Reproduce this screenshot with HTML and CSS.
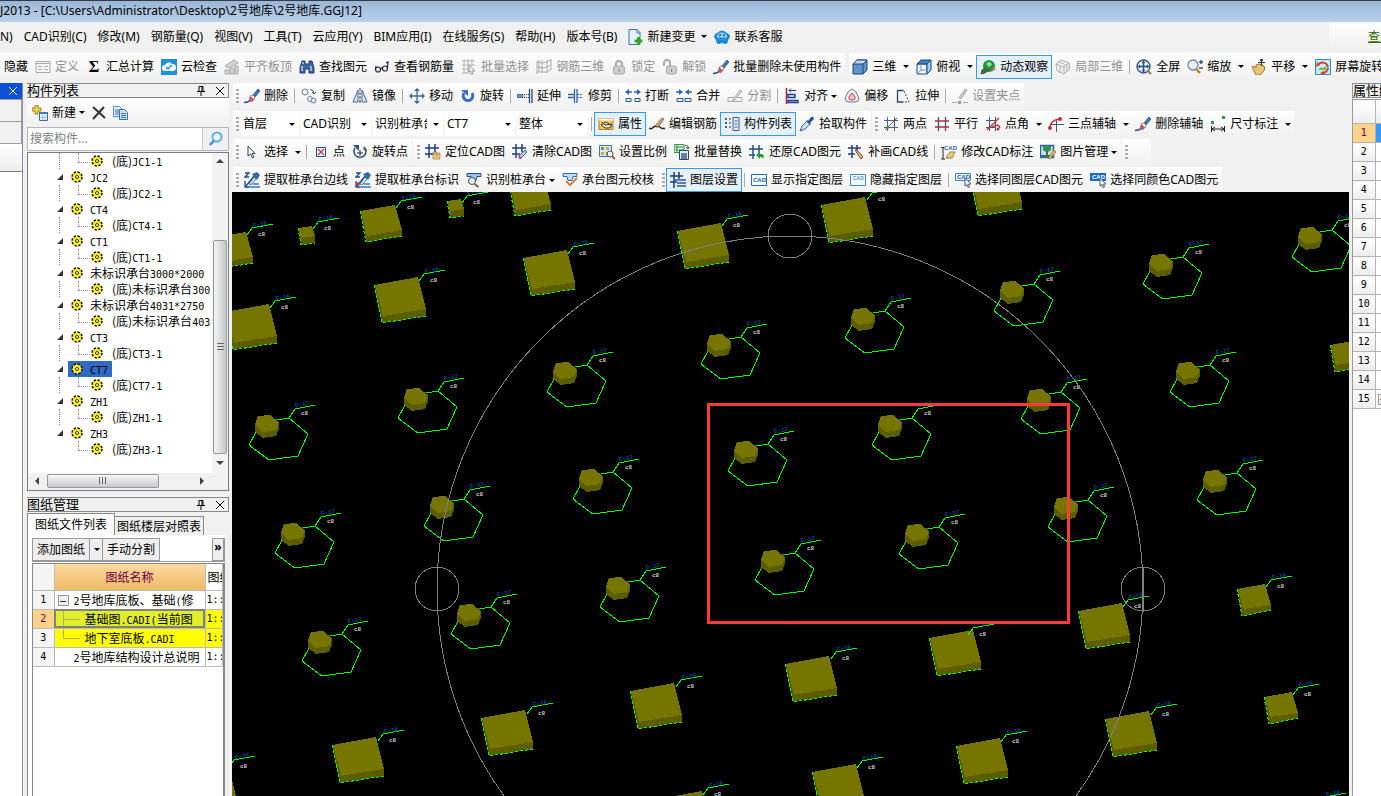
FILE: index.html
```html
<!DOCTYPE html>
<html lang="zh-CN">
<head>
<meta charset="utf-8">
<title>GGJ2013</title>
<link rel="stylesheet" href="styles.css">
</head>
<body>
<svg class="defs" aria-hidden="true"><defs>
<symbol id="define" viewBox="0 0 16 16"><path d="M1 2.500h14v11H1z" fill="#f4f4f4" stroke="#a8a8a8"/><path d="M1 4.500h14M3 7.500h4M3 10.500h4M9 7.500h4M9 10.500h4" stroke="#aaa"/></symbol>
<symbol id="cloud" viewBox="0 0 16 16"><path d="M0 0h16v16H0z" fill="#1d8fe0"/><path d="M4 12a3 3 0 0 1 0-6 4 4 0 0 1 7-1 3.500 3.500 0 0 1 1 7z" fill="#fff"/><path d="M5 8l2 2 4-4" stroke="#1d8fe0" fill="none" stroke-width="1.500"/></symbol>
<symbol id="level" viewBox="0 0 16 16"><path d="M1 7l9-6 4 3-9 5zM1 11h4v4H1zM6 9h4v6H6zM11 7h3v8h-3z" fill="#d4d4d4" stroke="#a8a8a8"/></symbol>
<symbol id="bino" viewBox="0 0 16 16"><path d="M3 2h3v3h4V2h3l2 7v5h-5v-4H6v4H1V9z" fill="#41669e" stroke="#1f3c70"/><path d="M3 7v5M12 7v5M4 3v2" stroke="#b7cdec" stroke-width="1.500"/></symbol>
<symbol id="glass" viewBox="0 0 16 16"><g fill="none" stroke="#223" stroke-width="1.200"><circle cx="4" cy="10.500" r="2.500"/><circle cx="11" cy="9.500" r="2.500"/><path d="M6.500 10q1-2 2 0M1.500 10L2 7M13.500 9L14 3l-2 1"/></g></symbol>
<symbol id="bsel" viewBox="0 0 16 16"><path d="M1 2h13M1 6h13M1 10h7M1 14h7M3 0v15M7 0v15M11 0v7" stroke="#b4b4b4" fill="none"/><path d="M8 6l6 6-3 0 1 3-2 0-1-3-1 1z" fill="#eee" stroke="#999"/></symbol>
<symbol id="reb3d" viewBox="0 0 16 16"><path d="M1 2v13M6 1v13M11 1v13M15 0v11M1 3l5 1 5-1 4-2M1 8l5 1 5-1 4-2M1 13l5 0 5 0 4-3M3 1v12" fill="none" stroke="#aaa"/></symbol>
<symbol id="lock" viewBox="0 0 16 16"><path d="M5 8V5a3 3 0 0 1 6 0v3" fill="none" stroke="#aaa" stroke-width="2"/><rect x="2.500" y="7" width="11" height="8" rx="2" fill="#ccc" stroke="#aaa"/><path d="M8 10v3" stroke="#888"/></symbol>
<symbol id="unlock" viewBox="0 0 16 16"><path d="M2 7V4a3 3 0 0 1 6 0v3" fill="none" stroke="#aaa" stroke-width="2"/><rect x="4.500" y="7" width="10" height="8" rx="2" fill="#ccc" stroke="#aaa"/><path d="M9.500 10v3" stroke="#888"/></symbol>
<symbol id="brush" viewBox="0 0 16 16"><path d="M9 7l5-6 2 2-5 6z" fill="#3c74c2" stroke="#1d4680" stroke-width=".7"/><path d="M6 8l3-1 2 2-1 3z" fill="#f3ead2" stroke="#806f53" stroke-width=".7"/><path d="M5 11l1-3 4 4-2 2q-3 0-3-3z" fill="#c2577a"/><path d="M0 14.500q4 0 6-2" stroke="#274f8a" stroke-width="1.500" fill="none"/></symbol>
<symbol id="cube" viewBox="0 0 16 16"><path d="M1 5l4-4h10v10l-4 4H1z" fill="#5c94cf" stroke="#1e4675"/><path d="M1 5l4-4h10l-4 4z" fill="#bcdaf5" stroke="#1e4675"/><path d="M11 5v10" stroke="#1e4675"/></symbol>
<symbol id="cubetop" viewBox="0 0 16 16"><path d="M1 5h10v10H1z" fill="#f0f6fd" stroke="#1e4675"/><path d="M11 5l4-4v10l-4 4z" fill="#a9cbee" stroke="#1e4675"/><path d="M1 5l4-4h10l-4 4z" fill="#3f82c8" stroke="#1e4675"/><path d="M5 5v6h6M5 11l-4 4" stroke="#7095c0" fill="none"/></symbol>
<symbol id="orbit" viewBox="0 0 16 16"><circle cx="9" cy="7" r="6" fill="#1e9440"/><path d="M6 5q3-4 6 0-1 3-3 3z" fill="#8fe08f"/><path d="M1 15q0-5 4-6 1 3 5 1-4 5-9 5z" fill="#2a7a44" stroke="#7b4030" stroke-width=".8"/><circle cx="14" cy="10" r="1.500" fill="#ef7b2b"/></symbol>
<symbol id="local" viewBox="0 0 16 16"><path d="M1 5l5-4 8 3 1 6-6 5-7-3zM1 5l8 3 5-4M9 8v7M4 3l7 3M5 6v8M12 6v7" fill="#eee" stroke="#b0b0b0"/></symbol>
<symbol id="full" viewBox="0 0 16 16"><circle cx="7.500" cy="7.500" r="6.500" fill="#eaf1fa" stroke="#37527d" stroke-width="1.400"/><path d="M7.500 3v9M3 7.500h9" stroke="#214d91" stroke-width="1.500"/><path d="M7.500 1.500l2 2.500h-4zM7.500 13.500l2-2.500h-4zM1.500 7.500L4 5.500v4zM13.500 7.500L11 5.500v4z" fill="#214d91"/><path d="M12 12l3 3" stroke="#a96e2c" stroke-width="2"/></symbol>
<symbol id="zoom" viewBox="0 0 16 16"><circle cx="6" cy="6" r="5" fill="#e8f1fb" stroke="#6f87a8" stroke-width="1.300"/><path d="M9 10l4 4" stroke="#c08a3e" stroke-width="2.500"/><path d="M14 1v4M12 3h4M12 9h4" stroke="#294f8c" stroke-width="1.300"/></symbol>
<symbol id="pan" viewBox="0 0 16 16"><path d="M1 8l2-1 2 2 0-3 3-1 5 2 1 3-2 3-3 3H5z" fill="#e8c478" stroke="#9a7333"/><path d="M10.500 0v7M7 3.500h7M9 1.500L10.500 0 12 1.500" stroke="#333" stroke-width="1.200" fill="none"/></symbol>
<symbol id="rot" viewBox="0 0 16 16"><path d="M.5.500h15v15H.5z" fill="#c9ebfa" stroke="#2b88bd"/><path d="M3 6a5.500 5.500 0 0 1 10 2M13 9a5.500 5.500 0 0 1-6 5" fill="none" stroke="#e03a2f" stroke-width="2"/><path d="M1 8l1-5 3 3zM5 14l4-2v4z" fill="#e03a2f"/><path d="M3 11l3-3 2 1 3-2 1 4z" fill="#6cbd55"/></symbol>
<symbol id="copy" viewBox="0 0 16 16"><circle cx="4" cy="4" r="3" fill="#eef3fa" stroke="#6b7f9d"/><circle cx="9" cy="11" r="2.500" fill="#f4f7fb" stroke="#6b7f9d"/><circle cx="12.500" cy="12.500" r="2.500" fill="#d6e2f2" stroke="#6b7f9d"/><path d="M9 1.500q4 0 4 4M11 4l2 2 2-2" fill="none" stroke="#2a5aa5"/></symbol>
<symbol id="mirror" viewBox="0 0 16 16"><path d="M6 2v12H1zM10 2v12h5z" fill="#dfeaf8" stroke="#4065a0"/><path d="M8 0v16" stroke="#333" stroke-dasharray="3 1"/></symbol>
<symbol id="move" viewBox="0 0 16 16"><path d="M8 2v12M2 8h12" stroke="#41689f" stroke-width="1.300"/><path d="M8 0l3 3H5zM8 16l3-3H5zM0 8l3-3v6zM16 8l-3-3v6z" fill="#41689f"/></symbol>
<symbol id="rotate" viewBox="0 0 16 16"><path d="M4 5a4.800 4.800 0 1 0 8 0" fill="none" stroke="#3b6cc0" stroke-width="3"/><path d="M1 2h7v6z" fill="#3b6cc0"/></symbol>
<symbol id="extend" viewBox="0 0 16 16"><path d="M12.500 1v14M15 1v14" stroke="#26456e" stroke-width="1.300"/><path d="M0 6.500h6v3H0z" fill="#6f9ad3" stroke="#26456e" stroke-width=".7"/><path d="M7 6.500h5M7 9.500h5" stroke="#26456e" stroke-dasharray="1 1"/></symbol>
<symbol id="trim" viewBox="0 0 16 16"><path d="M0 6.500h6M0 9.500h6M6.500 1v14M9 1v14" stroke="#35659b" stroke-width="1.300"/><path d="M9 6.500h6M9 9.500h6" stroke="#35659b" stroke-dasharray="2 1"/></symbol>
<symbol id="break" viewBox="0 0 16 16"><path d="M1 10.500h5v3H1zM10 10.500h5v3h-5z" fill="#e5edf8" stroke="#35578c"/><path d="M3 4h4M9 4h4" stroke="#2c63b5" stroke-width="1.300"/><path d="M0 4l4-3v6zM16 4l-4-3v6z" fill="#2c63b5"/></symbol>
<symbol id="merge" viewBox="0 0 16 16"><path d="M1 10.500h6v3H1zM9 10.500h6v3H9z" fill="#e5edf8" stroke="#35578c"/><path d="M0 4h4M12 4h4" stroke="#2c63b5" stroke-width="1.300"/><path d="M7 4L3 1v6zM9 4l4-3v6z" fill="#2c63b5"/></symbol>
<symbol id="split" viewBox="0 0 16 16"><path d="M1 9.500h14v4H1z" fill="#f4f4f4" stroke="#aaa"/><path d="M5 13l8-11 2 1-8 10z" fill="#ddd" stroke="#aaa"/></symbol>
<symbol id="align" viewBox="0 0 16 16"><path d="M2.500 0v16" stroke="#b01e32" stroke-width="1.500"/><path d="M4 6.500h7v3H4zM4 12.500h10v2H4z" fill="#dde9fa" stroke="#1c3c8c" stroke-width="1.400"/><path d="M12 2.500H5l2-2M5 2.500l2 2" stroke="#1c3c8c" fill="none"/></symbol>
<symbol id="offset" viewBox="0 0 16 16"><path d="M8 1l4 3 3 6q0 4-4 4H5q-4 0-4-4l3-6z" fill="#eef2f8" stroke="#627ba0"/><path d="M8 5l3 4q1 3-3 3t-3-3z" fill="#f5c5c5" stroke="#c63b40"/></symbol>
<symbol id="stretch" viewBox="0 0 16 16"><path d="M2.500 2.500h6M2.500 2v12h6" fill="none" stroke="#26456e" stroke-width="1.300"/><path d="M9 3l5 11H9" fill="none" stroke="#26456e" stroke-dasharray="2 1.500"/></symbol>
<symbol id="nip" viewBox="0 0 16 16"><path d="M7 10l6-9 2 1-6 9z" fill="#ccc" stroke="#aaa"/><path d="M0 14.500h5M11 14.500h5" stroke="#aaa"/><path d="M6 13h3v3H6z" fill="#999"/></symbol>
<symbol id="prop" viewBox="0 0 16 16"><path d="M1 2.500h14v11H1z" fill="#f7c45f" stroke="#b08030"/><path d="M1 3.500h14" stroke="#fff" stroke-width="2"/><path d="M3 9l5-3 6 4-3 2H7z" fill="#fbe4ac" stroke="#333"/><path d="M4 6l3 3 7-1" stroke="#333" fill="none"/></symbol>
<symbol id="editreb" viewBox="0 0 16 16"><path d="M0 12.500h3l2-2h5l3 2h3" fill="none" stroke="#222" stroke-width="1.300"/><path d="M6 10l7-8 2 1-6 8z" fill="#dca06a" stroke="#7c4520" stroke-width=".7"/></symbol>
<symbol id="list" viewBox="0 0 16 16"><path d="M2 2v12" stroke="#3a608f" stroke-width="2" stroke-dasharray="2 2"/><path d="M5 3h2M5 7h2M5 11h2" stroke="#333"/><path d="M9 1.500h6v13H9z" fill="#e2ecf9" stroke="#3a608f"/><path d="M10.500 5h3M10.500 8h3M10.500 11h3" stroke="#3a608f"/></symbol>
<symbol id="pick" viewBox="0 0 16 16"><path d="M1 15l2-5 5-5 3 3-5 5z" fill="#cfe1f5" stroke="#3a608f"/><path d="M7 5l1-1 1 1 3-4q3-1 3 2l-4 4 1 1-1 1z" fill="#245a9d"/></symbol>
<symbol id="twopt" viewBox="0 0 16 16"><path d="M4.500 1v14M11.500 1v14M1 4.500h14M1 11.500h14" stroke="#41609d"/><path d="M2 14L14 2" stroke="#b03030"/><circle cx="4.500" cy="11.500" r="1.500" fill="#318e3d"/></symbol>
<symbol id="para" viewBox="0 0 16 16"><path d="M4.500 1v14M11.500 1v14" stroke="#3c5488" stroke-width="1.300"/><path d="M1 5h14M1 11h14" stroke="#a33" stroke-width="1.300"/></symbol>
<symbol id="angle" viewBox="0 0 16 16"><path d="M4.500 1v14M10.500 1v14M1 4.500h10M1 11.500h10" stroke="#3c5488"/><path d="M2 14L14 2M7 11q7-4 8 1" stroke="#c32f36" stroke-width="1.300" fill="none"/><circle cx="13" cy="13" r="1.500" fill="#c32f36"/></symbol>
<symbol id="three" viewBox="0 0 16 16"><path d="M8.500 4v12M3 8.500h13" stroke="#3c5488"/><path d="M2 12q0-8 10-9" fill="none" stroke="#c32f36" stroke-width="1.500"/><circle cx="2" cy="12" r="2" fill="#c32f36"/><circle cx="12" cy="3" r="2" fill="#c32f36"/></symbol>
<symbol id="dim" viewBox="0 0 16 16"><path d="M1 5h3v3H1zM12 0h3v3h-3z" fill="#299b43"/><path d="M1.500 10v6M14.500 10v6M2 13h12M5 11l-3 2 3 2M11 11l3 2-3 2" stroke="#222" fill="none"/></symbol>
<symbol id="cursor" viewBox="0 0 16 16"><path d="M4 2v10l2.500-2 2 4 1.500-1-2-3.500H11z" fill="#fff" stroke="#33415d"/></symbol>
<symbol id="point" viewBox="0 0 16 16"><path d="M3.500 3.500h9v9h-9z" fill="#fff" stroke="#264b8e"/><path d="M5 5l6 6M11 5l-6 6" stroke="#b6334a" stroke-width="1.300"/></symbol>
<symbol id="rotpt" viewBox="0 0 16 16"><path d="M3 4a6 6 0 1 0 9-1" fill="none" stroke="#2c5080" stroke-width="1.500"/><path d="M1 1h6v6z" fill="#2c5080"/><path d="M8 6v6M5 9h6" stroke="#222"/><path d="M12 3v3h3" fill="none" stroke="#b33"/></symbol>
<symbol id="poscad" viewBox="0 0 16 16"><path d="M4 0v14M10 0v8M0 4h14M0 10h8" stroke="#1e3d84" stroke-width="1.500"/><path d="M8 8h2v3h1V8h1v3h1V9h2v6H8z" fill="#edc16d" stroke="#9a7333" stroke-width=".6"/></symbol>
<symbol id="clrcad" viewBox="0 0 16 16"><path d="M4 0v14M10 0v8M0 4h14M0 10h8" stroke="#1e3d84" stroke-width="1.500"/><path d="M7 12l6-6 2 2-6 6z" fill="#b8cce9" stroke="#445c7d"/><path d="M6 11l4 4h-3z" fill="#c2577a"/></symbol>
<symbol id="scale" viewBox="0 0 16 16"><path d="M.5 1.500h12v11H.5z" fill="#d7ebfb" stroke="#3b77b5"/><path d="M2 3h3v3H2zM7 8h2v3H7z" fill="#57a744"/><path d="M7 3h3v3H7zM2 8h3v3H2z" fill="#e89b35"/><circle cx="11" cy="10" r="3" fill="#eef6fd" stroke="#555"/><path d="M13 12l3 3" stroke="#96592b" stroke-width="2"/></symbol>
<symbol id="repl" viewBox="0 0 16 16"><path d="M0 .5h10v8H0z" fill="#d8f0dc" stroke="#3c9450"/><path d="M0 3h10M0 6h10M3 0v8" stroke="#3c9450"/><path d="M5.500 6.500h9v9h-9z" fill="#e5edf8" stroke="#26456e"/><path d="M8 9v6M10 9v6M12 9v6" stroke="#26456e" stroke-width="1.300"/><path d="M11 1.500q4 0 3 3M12 3l2 2 1-2" fill="none" stroke="#444"/></symbol>
<symbol id="restore" viewBox="0 0 16 16"><path d="M4 1v14M10 1v8M0 5h14M0 11h6" stroke="#26517a" stroke-width="1.500"/><path d="M7 11l4-3v2h2q3 1 1 5 0-2-3-2v2z" fill="#2d9a42"/></symbol>
<symbol id="patch" viewBox="0 0 16 16"><path d="M4 1v13M9 1v6M0 4h13M0 10h7" stroke="#1e3d84" stroke-width="1.500"/><path d="M7 6l2 0 6 7-2 2z" fill="#e7ba71" stroke="#704920"/></symbol>
<symbol id="modcad" viewBox="0 0 16 16"><text x="3" y="6" font-size="6" font-weight="bold" fill="#2465a8" font-family="Liberation Sans">CAD</text><path d="M0 3.500h3M2 4v11M0 15h4" stroke="#222"/><path d="M5 14l4-6 5 0-3 6z" fill="#efcf86" stroke="#a77b32"/></symbol>
<symbol id="image" viewBox="0 0 16 16"><path d="M.5 1.500h13v12H.5z" fill="#bfe1fb" stroke="#2d68a4" stroke-width="1.500"/><path d="M3 2h8v4q-4 4-8 0z" fill="#38934a"/><path d="M1 11h12v2H1zM6 7h2v4H6z" fill="#38734a"/><path d="M8 14l6-8 2 2-6 7z" fill="#f0bd4a" stroke="#7f5921" stroke-width=".7"/></symbol>
<symbol id="ext1" viewBox="0 0 16 16"><path d="M1 1h4L1 5h4M1 9v6h4M2 14l9-11" fill="none" stroke="#1b4b84" stroke-width="1.300"/><path d="M4 15h12M9 12h6" stroke="#3c7ab9" stroke-width="1.500"/><path d="M8 2l5-2 3 3-3 5z" fill="#2a6db1"/><path d="M5 12l5-7 2 2-5 6z" fill="#d2e4f5" stroke="#1b4b84" stroke-width=".7"/></symbol>
<symbol id="ext2" viewBox="0 0 16 16"><path d="M1 1h4L1 5h4M1 9v6h4M2 14l9-11" fill="none" stroke="#1b4b84" stroke-width="1.300"/><path d="M4 15h12M9 12h6" stroke="#3c7ab9" stroke-width="1.500"/><path d="M8 2l5-2 3 3-3 5z" fill="#2a6db1"/><path d="M5 12l5-7 2 2-5 6z" fill="#d2e4f5" stroke="#1b4b84" stroke-width=".7"/><path d="M1.500 10.500h3v3h-3z" fill="#c62b2b"/></symbol>
<symbol id="ident" viewBox="0 0 16 16"><path d="M1 1.500h14v3h-4l-1 4H7L5 4.500H1z" fill="#9cc3ea" stroke="#24518a"/><circle cx="6" cy="9" r="3.500" fill="#e8f2fc" stroke="#444"/><path d="M8.500 12l4 3" stroke="#96592b" stroke-width="2"/></symbol>
<symbol id="check" viewBox="0 0 16 16"><path d="M1 1.500h14v3h-4l-1 4H6L5 4.500H1z" fill="#bcdcf8" stroke="#2d6dac"/><path d="M4 9l4 4 7-7" stroke="#d47e45" stroke-width="2" fill="none"/></symbol>
<symbol id="layer" viewBox="0 0 16 16"><path d="M4 0v16M9 0v7M0 4h13M0 10h7" stroke="#183c70" stroke-width="1.500"/><path d="M5 8h11M7 11h9M7 14h9" stroke="#2c5aa0" stroke-width="1.500"/></symbol>
<symbol id="showcad" viewBox="0 0 16 16"><path d="M.5 2.500h15v11H.5z" fill="#f2f9ff" stroke="#236ba9"/><text x="2" y="10" font-size="6" font-weight="bold" fill="#2465a8" font-family="Liberation Sans">CAD</text></symbol>
<symbol id="hidecad" viewBox="0 0 16 16"><path d="M.5 2.500h15v11H.5z" fill="#f2f9ff" stroke="#3c86bf"/><text x="3" y="8" font-size="5" font-weight="bold" fill="#5d94c5" font-family="Liberation Sans">CAD</text></symbol>
<symbol id="selcad1" viewBox="0 0 16 16"><path d="M.5 1.500h15v7H.5z" fill="#e8f4fd" stroke="#3c86bf"/><text x="2" y="7" font-size="6" font-weight="bold" fill="#2465a8" font-family="Liberation Sans">CAD</text><path d="M10 6v8l2-1.500 1 3 1.500-.5-1-3H16z" fill="#fff" stroke="#556"/></symbol>
<symbol id="selcad2" viewBox="0 0 16 16"><path d="M0 1h16v8H0z" fill="#1b6ec6"/><text x="2" y="7" font-size="6" font-weight="bold" fill="#fff" font-family="Liberation Sans">CAD</text><path d="M10 6v8l2-1.500 1 3 1.500-.5-1-3H16z" fill="#fff" stroke="#556"/></symbol>
<symbol id="newdoc" viewBox="0 0 16 16"><path d="M2 .5h8l3 3v12H2z" fill="#e5f2fd" stroke="#3572ad"/><path d="M10 1v3h3" fill="none" stroke="#3572ad"/><path d="M10 8h3v2.500h2.500v3H13V16h-3v-2.500H7.500v-3H10z" fill="#35a82a"/></symbol>
<symbol id="service" viewBox="0 0 16 16"><path d="M3 4q5-5 10 0 3 1 3 4l-2 3q0 4-3 4l-3-1-3 1q-3 0-3-4L0 8q0-3 3-4z" fill="#148ae0"/><ellipse cx="8" cy="7" rx="5" ry="3.500" fill="#8fd0fa"/><circle cx="6" cy="6" r="1" fill="#124a7d"/><circle cx="10" cy="6" r="1" fill="#124a7d"/><path d="M5 8.500q3 3 6 0" stroke="#124a7d" fill="none"/></symbol>
<symbol id="newcomp" viewBox="0 0 16 16"><path d="M3 0h3v3h3v3H6v3H3V6H0V3h3z" fill="#f3d548" stroke="#8b6c12" stroke-width=".8"/><path d="M7.500 7.500h8v8h-8z" fill="#eaf3fd" stroke="#3b6da7"/><path d="M7 7h9v2H7z" fill="#3b7cc8"/><path d="M8 12.500h7M10.500 10v5M13 10v5" stroke="#a7c3e3"/></symbol>
<symbol id="cross" viewBox="0 0 16 16"><path d="M2 2l12 11M13 2L2 14" stroke="#333" stroke-width="2" fill="none"/></symbol>
<symbol id="pages" viewBox="0 0 16 16"><path d="M.5 1.500h6l3 3v7h-9z" fill="#deebf9" stroke="#5c8cc8"/><path d="M2 5h4M2 7h4M2 9h4" stroke="#3c70b2"/><path d="M6.500 4.500h5l3 3v7h-8z" fill="#cfe2f8" stroke="#3c70b2"/><path d="M8 8.500h5M8 10.500h5M8 12.500h5" stroke="#3c70b2"/></symbol>
<symbol id="find" viewBox="0 0 16 16"><circle cx="9" cy="6" r="4.500" fill="#eef8ff" stroke="#58aee8" stroke-width="2"/><path d="M5.500 10L2 14" stroke="#3d8fd0" stroke-width="2.500"/></symbol>
<symbol id="gear" viewBox="0 0 12 12"><circle cx="6" cy="6" r="5" fill="#f8ee10" stroke="#111" stroke-width="1.500" stroke-dasharray="2.400 1.500"/><circle cx="6" cy="6" r="1.500" fill="#fff" stroke="#333"/></symbol>
<symbol id="pin" viewBox="0 0 8 10"><path d="M2 .5h4v5H2zM0 5.500h8M4 6v4M5 1v4" fill="none" stroke="#000"/></symbol>
<symbol id="close" viewBox="0 0 8 8"><path d="M0 0l8 8M8 0L0 8" stroke="currentColor" fill="none"/></symbol>
<g id="leader"><path class="wire" d="M1 3L6-4 27-8"/><text class="tag" x="7" y="-5" transform="rotate(-8 7 -5)">C-15</text><text class="lvl" x="12" y="4">c8</text></g>
<g id="cap"><path class="wire" d="M10-4L22-6 41 10 31 32 2 36-18 21-11 8M22-6L28-15 48-19"/><text class="tag" x="28" y="-17" transform="rotate(-8 28 -17)">C-17</text><text class="lvl" x="34" y="-9">c8</text><path class="side" d="M-12 1L-12 8-4 14 9 12 12 5V-2z"/><path class="top" d="M-9-8L3-9 12-2 9 6-4 8-12 1z"/></g>
<g id="slab"><path class="side" d="M0 0L8 38 52 31V25L44-8z"/><path class="top" d="M1 0L44-8 52 24 9 31z"/><path class="edge" d="M0 0L8 38 52 31"/></g>
<g id="slab-m"><path class="side" d="M0 0L6 31 42 25V20L35-6z"/><path class="top" d="M1 0L35-6 42 19 7 25z"/><path class="edge" d="M0 0L6 31 42 25"/></g>
<g id="slab-s"><path class="side" d="M0 0L5 27 34 21V16L28-5z"/><path class="top" d="M1 0L28-5 34 16 6 20z"/><path class="edge" d="M0 0L5 27 34 21"/></g>
<g id="slab-t"><path class="side" d="M0 0L3 17 17 15V8L14-2z"/><path class="top" d="M0 0L14-2 17 8 3 10z"/><path class="edge" d="M0 0L3 17 17 15"/></g>
</defs></svg>

<header class="title">J2013 - [C:\Users\Administrator\Desktop\2号地库\2号地库.GGJ12]</header>
<nav class="menu">
<button>N)</button><button>CAD识别(C)</button><button>修改(M)</button><button>钢筋量(Q)</button><button>视图(V)</button><button>工具(T)</button><button>云应用(Y)</button><button>BIM应用(I)</button><button>在线服务(S)</button><button>帮助(H)</button><button>版本号(B)</button>
<button class="tool"><svg class="i"><use href="#newdoc"/></svg>新建变更</button><button class="drop" aria-label="新建变更选项"></button><button class="tool"><svg class="i"><use href="#service"/></svg>联系客服</button>
<span class="promo"><a href="#">查改</a></span>
</nav>
<div class="topbar">
<div class="bar first"><button class="tool">隐藏</button><button class="tool off"><svg class="i"><use href="#define"/></svg>定义</button><button class="tool"><span class="i sigma">Σ</span>汇总计算</button><button class="tool"><svg class="i"><use href="#cloud"/></svg>云检查</button><button class="tool off"><svg class="i"><use href="#level"/></svg>平齐板顶</button><button class="tool"><svg class="i"><use href="#bino"/></svg>查找图元</button><button class="tool"><svg class="i"><use href="#glass"/></svg>查看钢筋量</button><button class="tool off"><svg class="i"><use href="#bsel"/></svg>批量选择</button><button class="tool off"><svg class="i"><use href="#reb3d"/></svg>钢筋三维</button><button class="tool off"><svg class="i"><use href="#lock"/></svg>锁定</button><button class="tool off"><svg class="i"><use href="#unlock"/></svg>解锁</button><button class="tool"><svg class="i"><use href="#brush"/></svg>批量删除未使用构件</button></div>
<div class="bar view"><button class="tool"><svg class="i"><use href="#cube"/></svg>三维</button><button class="drop" aria-label="三维选项"></button><button class="tool"><svg class="i"><use href="#cubetop"/></svg>俯视</button><button class="drop" aria-label="俯视选项"></button><button class="tool on"><svg class="i"><use href="#orbit"/></svg>动态观察</button><button class="tool off"><svg class="i"><use href="#local"/></svg>局部三维</button><i class="sep"></i><button class="tool"><svg class="i"><use href="#full"/></svg>全屏</button><button class="tool"><svg class="i"><use href="#zoom"/></svg>缩放</button><button class="drop" aria-label="缩放选项"></button><button class="tool"><svg class="i"><use href="#pan"/></svg>平移</button><button class="drop" aria-label="平移选项"></button><button class="tool"><svg class="i"><use href="#rot"/></svg>屏幕旋转</button></div>
</div>

<main class="work">
<aside class="strip"><div class="strip-head"><svg class="x"><use href="#close"/></svg></div><div class="strip-cell"></div><div class="strip-cell"></div><div class="strip-gap"></div><div class="strip-body"></div></aside>

<aside class="dock">
<section class="panel components">
<h2 class="head"><span>构件列表</span><svg class="pin"><use href="#pin"/></svg><svg class="x"><use href="#close"/></svg></h2>
<div class="panel-tools"><button class="tool"><svg class="i"><use href="#newcomp"/></svg>新建<b class="dd"></b></button><button class="tool" aria-label="删除构件"><svg class="i"><use href="#cross"/></svg></button><button class="tool" aria-label="复制构件"><svg class="i"><use href="#pages"/></svg></button></div>
<div class="search"><input type="text" placeholder="搜索构件..." aria-label="搜索构件"><button aria-label="搜索"><svg class="i"><use href="#find"/></svg></button></div>
<div class="tree-box">
<ul class="tree">
<li class="child"><svg class="g"><use href="#gear"/></svg><span>(底)<em>JC1-1</em></span></li>
<li class="node"><svg class="g"><use href="#gear"/></svg><span><em>JC2</em></span></li>
<li class="child"><svg class="g"><use href="#gear"/></svg><span>(底)<em>JC2-1</em></span></li>
<li class="node"><svg class="g"><use href="#gear"/></svg><span><em>CT4</em></span></li>
<li class="child"><svg class="g"><use href="#gear"/></svg><span>(底)<em>CT4-1</em></span></li>
<li class="node"><svg class="g"><use href="#gear"/></svg><span><em>CT1</em></span></li>
<li class="child"><svg class="g"><use href="#gear"/></svg><span>(底)<em>CT1-1</em></span></li>
<li class="node"><svg class="g"><use href="#gear"/></svg><span>未标识承台<em>3000*2000</em></span></li>
<li class="child"><svg class="g"><use href="#gear"/></svg><span>(底)未标识承台<em>300</em></span></li>
<li class="node"><svg class="g"><use href="#gear"/></svg><span>未标识承台<em>4031*2750</em></span></li>
<li class="child"><svg class="g"><use href="#gear"/></svg><span>(底)未标识承台<em>403</em></span></li>
<li class="node"><svg class="g"><use href="#gear"/></svg><span><em>CT3</em></span></li>
<li class="child"><svg class="g"><use href="#gear"/></svg><span>(底)<em>CT3-1</em></span></li>
<li class="node"><mark><svg class="g"><use href="#gear"/></svg><span><em>CT7</em></span></mark></li>
<li class="child"><svg class="g"><use href="#gear"/></svg><span>(底)<em>CT7-1</em></span></li>
<li class="node"><svg class="g"><use href="#gear"/></svg><span><em>ZH1</em></span></li>
<li class="child"><svg class="g"><use href="#gear"/></svg><span>(底)<em>ZH1-1</em></span></li>
<li class="node"><svg class="g"><use href="#gear"/></svg><span><em>ZH3</em></span></li>
<li class="child last"><svg class="g"><use href="#gear"/></svg><span>(底)<em>ZH3-1</em></span></li>
</ul>
<div class="vscroll"><i class="up"></i><div class="vthumb"><i></i></div><i class="down"></i></div>
<div class="hscroll"><i class="left"></i><div class="hthumb"><i></i></div><i class="right"></i></div>
</div>
</section>

<section class="panel drawings">
<h2 class="head"><span>图纸管理</span><svg class="pin"><use href="#pin"/></svg><svg class="x"><use href="#close"/></svg></h2>
<div class="tabs"><button class="tab cur">图纸文件列表</button><button class="tab">图纸楼层对照表</button></div>
<div class="sheet">
<div class="sheet-tools"><button>添加图纸</button><button class="arrow" aria-label="添加图纸选项"><b class="dd"></b></button><button>手动分割</button><button class="more">»</button></div>
<div class="grid-wrap"><table class="grid">
<colgroup><col class="c-num"><col class="c-name"><col></colgroup>
<tr><th></th><th class="hot">图纸名称</th><th class="cut">图纸</th></tr>
<tr><td class="num">1</td><td class="name"><span class="fold">−</span><em>2</em>号地库底板、基础<em>(</em>修</td><td>1::</td></tr>
<tr class="yellow"><td class="num sel">2</td><td class="name cell">基础图<em>.CADI(</em>当前图</td><td>1::</td></tr>
<tr class="yellow"><td class="num">3</td><td class="name kid">地下室底板<em>.CADI</em></td><td>1::</td></tr>
<tr><td class="num">4</td><td class="name"><em>2</em>号地库结构设计总说明</td><td>1::</td></tr>
</table></div>
</div>
</section>
</aside>

<section class="center">
<div class="row"><div class="bar grip"><button class="tool"><svg class="i"><use href="#brush"/></svg>删除</button><i class="sep"></i><button class="tool"><svg class="i"><use href="#copy"/></svg>复制</button><button class="tool"><svg class="i"><use href="#mirror"/></svg>镜像</button><i class="sep"></i><button class="tool"><svg class="i"><use href="#move"/></svg>移动</button><button class="tool"><svg class="i"><use href="#rotate"/></svg>旋转</button><i class="sep"></i><button class="tool"><svg class="i"><use href="#extend"/></svg>延伸</button><button class="tool"><svg class="i"><use href="#trim"/></svg>修剪</button><i class="sep"></i><button class="tool"><svg class="i"><use href="#break"/></svg>打断</button><button class="tool"><svg class="i"><use href="#merge"/></svg>合并</button><button class="tool off"><svg class="i"><use href="#split"/></svg>分割</button><i class="sep"></i><button class="tool"><svg class="i"><use href="#align"/></svg>对齐<b class="dd"></b></button><button class="tool"><svg class="i"><use href="#offset"/></svg>偏移</button><button class="tool"><svg class="i"><use href="#stretch"/></svg>拉伸</button><i class="sep"></i><button class="tool off"><svg class="i"><use href="#nip"/></svg>设置夹点</button></div></div>
<div class="row"><div class="bar grip"><span class="pick short"><select aria-label="楼层"><option>首层</option></select></span><span class="pick"><select aria-label="构件类别"><option>CAD识别</option></select></span><span class="pick"><select aria-label="构件类型"><option>识别桩承台</option></select></span><span class="pick"><select aria-label="构件"><option>CT7</option></select></span><span class="pick"><select aria-label="范围"><option>整体</option></select></span><i class="sep"></i><button class="tool on"><svg class="i"><use href="#prop"/></svg>属性</button><button class="tool"><svg class="i"><use href="#editreb"/></svg>编辑钢筋</button><button class="tool on"><svg class="i"><use href="#list"/></svg>构件列表</button><button class="tool"><svg class="i"><use href="#pick"/></svg>拾取构件</button></div><div class="bar grip"><button class="tool"><svg class="i"><use href="#twopt"/></svg>两点</button><button class="tool"><svg class="i"><use href="#para"/></svg>平行</button><button class="tool"><svg class="i"><use href="#angle"/></svg>点角</button><button class="drop" aria-label="点角选项"></button><button class="tool"><svg class="i"><use href="#three"/></svg>三点辅轴</button><button class="drop" aria-label="三点辅轴选项"></button><button class="tool"><svg class="i"><use href="#brush"/></svg>删除辅轴</button><button class="tool"><svg class="i"><use href="#dim"/></svg>尺寸标注</button><button class="drop" aria-label="尺寸标注选项"></button></div></div>
<div class="row"><div class="bar grip"><button class="tool"><svg class="i"><use href="#cursor"/></svg>选择</button><button class="drop" aria-label="选择选项"></button><i class="sep"></i><button class="tool"><svg class="i"><use href="#point"/></svg>点</button><button class="tool"><svg class="i"><use href="#rotpt"/></svg>旋转点</button></div><div class="bar grip cad"><button class="tool"><svg class="i"><use href="#poscad"/></svg>定位CAD图</button><button class="tool"><svg class="i"><use href="#clrcad"/></svg>清除CAD图</button><button class="tool"><svg class="i"><use href="#scale"/></svg>设置比例</button><button class="tool"><svg class="i"><use href="#repl"/></svg>批量替换</button><button class="tool"><svg class="i"><use href="#restore"/></svg>还原CAD图元</button><button class="tool"><svg class="i"><use href="#patch"/></svg>补画CAD线</button><i class="sep"></i><button class="tool"><svg class="i"><use href="#modcad"/></svg>修改CAD标注</button><button class="tool"><svg class="i"><use href="#image"/></svg>图片管理<b class="dd"></b></button></div><div class="bar grip empty"></div></div>
<div class="row"><div class="bar grip"><button class="tool"><svg class="i"><use href="#ext1"/></svg>提取桩承台边线</button><button class="tool"><svg class="i"><use href="#ext2"/></svg>提取桩承台标识</button><button class="tool"><svg class="i"><use href="#ident"/></svg>识别桩承台<b class="dd"></b></button><button class="tool"><svg class="i"><use href="#check"/></svg>承台图元校核</button></div><div class="bar grip"><button class="tool on"><svg class="i"><use href="#layer"/></svg>图层设置</button><i class="sep"></i><button class="tool"><svg class="i"><use href="#showcad"/></svg>显示指定图层</button><button class="tool"><svg class="i"><use href="#hidecad"/></svg>隐藏指定图层</button><i class="sep"></i><button class="tool"><svg class="i"><use href="#selcad1"/></svg>选择同图层CAD图元</button><button class="tool"><svg class="i"><use href="#selcad2"/></svg>选择同颜色CAD图元</button></div></div>
<div class="canvas"><svg class="scene" role="img" aria-label="桩承台三维视图"><g transform="translate(-232 -192)">
<use href="#slab-m" x="211" y="238"/><use href="#leader" x="246" y="232"/>
<use href="#slab-t" x="298" y="228"/><use href="#leader" x="312" y="226"/>
<use href="#slab-m" x="360" y="211"/><use href="#leader" x="395" y="205"/>
<use href="#slab-t" x="447" y="201"/><use href="#leader" x="461" y="200"/>
<use href="#slab-m" x="509" y="185"/>
<use href="#slab" x="225" y="312"/><use href="#leader" x="269" y="305"/>
<use href="#slab" x="374" y="285"/><use href="#leader" x="418" y="278"/>
<use href="#slab" x="523" y="258"/><use href="#leader" x="567" y="251"/>
<use href="#slab" x="677" y="231"/><use href="#leader" x="721" y="223"/>
<use href="#slab" x="821" y="205"/><use href="#leader" x="866" y="197"/>
<use href="#slab" x="970" y="178"/>
<use href="#slab-s" x="1330" y="345"/>
<use href="#slab" x="184" y="772"/><use href="#leader" x="228" y="764"/>
<use href="#slab" x="332" y="745"/><use href="#leader" x="377" y="738"/>
<use href="#slab" x="481" y="718"/><use href="#leader" x="526" y="711"/>
<use href="#slab" x="630" y="691"/><use href="#leader" x="675" y="684"/>
<use href="#slab" x="785" y="664"/><use href="#leader" x="830" y="656"/>
<use href="#slab" x="929" y="638"/><use href="#leader" x="967" y="632"/>
<use href="#slab" x="1078" y="611"/><use href="#leader" x="1122" y="604"/>
<use href="#slab-s" x="1237" y="589"/><use href="#leader" x="1265" y="584"/>
<use href="#slab" x="658" y="799"/><use href="#leader" x="702" y="792"/>
<use href="#slab" x="812" y="772"/><use href="#leader" x="856" y="765"/>
<use href="#slab" x="956" y="746"/><use href="#leader" x="1000" y="739"/>
<use href="#slab" x="1105" y="719"/><use href="#leader" x="1150" y="712"/>
<use href="#slab-s" x="1264" y="697"/><use href="#leader" x="1292" y="692"/>
<use href="#leader" x="1319" y="801"/>
<use href="#cap" x="267" y="424"/><use href="#cap" x="416" y="397"/><use href="#cap" x="565" y="371"/><use href="#cap" x="719" y="343"/><use href="#cap" x="863" y="317"/><use href="#cap" x="1012" y="290"/><use href="#cap" x="1161" y="263"/><use href="#cap" x="1310" y="236"/>
<use href="#cap" x="293" y="532"/><use href="#cap" x="442" y="505"/><use href="#cap" x="591" y="478"/><use href="#cap" x="746" y="450"/><use href="#cap" x="890" y="424"/><use href="#cap" x="1039" y="398"/><use href="#cap" x="1188" y="371"/>
<use href="#cap" x="320" y="640"/><use href="#cap" x="469" y="613"/><use href="#cap" x="618" y="586"/><use href="#cap" x="773" y="559"/><use href="#cap" x="917" y="533"/><use href="#cap" x="1066" y="506"/><use href="#cap" x="1215" y="479"/>
<g class="orbit"><circle cx="790" cy="589" r="353"/><circle cx="790" cy="236" r="22"/><circle cx="437" cy="589" r="22"/><circle cx="1143" cy="589" r="22"/><path d="M768 236.500h45M437.500 567v45M1143.500 567v45"/></g>
<rect class="frame" x="708.500" y="404.500" width="360" height="218"/>
</g></svg></div>
</section>

<aside class="props">
<h2 class="head"><span>属性编辑器</span></h2>
<table class="ptable">
<tr class="phead"><th></th><th></th></tr>
<tr><th class="sel">1</th><td class="blue"></td></tr><tr><th>2</th><td></td></tr><tr><th>3</th><td></td></tr><tr><th>4</th><td></td></tr><tr><th>5</th><td></td></tr><tr><th>6</th><td></td></tr><tr><th>7</th><td></td></tr><tr><th>8</th><td></td></tr><tr><th>9</th><td></td></tr><tr><th>10</th><td></td></tr><tr><th>11</th><td></td></tr><tr><th>12</th><td></td></tr><tr><th>13</th><td></td></tr><tr><th>14</th><td></td></tr><tr><th>15</th><td><span class="fold">+</span></td></tr>
</table>
</aside>
</main>
</body>
</html>
```

FILE: styles.css
```css
* { box-sizing: border-box; }
body { margin: 0; height: 100vh; overflow: hidden; display: flex; flex-direction: column; background: #f0f0f0; color: #000; font: 12px/16px "Noto Sans", "Noto Sans CJK SC", sans-serif; white-space: nowrap; }
button, input, select { font: inherit; color: inherit; border: 0; padding: 0; margin: 0; background: none; white-space: nowrap; }
.defs { position: absolute; width: 0; height: 0; }
em { font: 10px/12px "DejaVu Sans Mono", monospace; }
i, b { font-style: normal; }

.title { flex: none; height: 22px; line-height: 20px; background: linear-gradient(#9ab5d6, #b9d1ea); border-top: 1px solid #333a44; }
.menu { flex: none; height: 31px; display: flex; align-items: center; padding-bottom: 2px; gap: 11px; }
.menu .tool { margin-left: -4px; }
.menu .drop { margin: 0 -11px; }
.menu .drop + .tool { margin-left: 2px; }
.promo { margin-left: auto; width: 52px; height: 27px; line-height: 27px; padding-left: 39px; overflow: hidden; background: linear-gradient(#fdfdfd, #f0f0f0); }
.promo a { color: #336600; }

.topbar { flex: none; height: 27px; display: flex; gap: 4px; overflow: hidden; }
.bar { display: flex; align-items: center; gap: 1px; height: 100%; background: linear-gradient(#fdfdfd, #f0f0f0); padding-right: 1px; flex: none; }
.first { padding-left: 1px; }
.view { flex: 1 0 auto; }
.tool { display: inline-flex; align-items: center; gap: 4px; height: 22px; padding: 0 3px; flex: none; }
.tool.off { color: #909090; }
.tool.on { background: #e5f0fb; box-shadow: 0 0 0 1px #3399ff; }
.i { width: 16px; height: 16px; display: block; flex: none; }
.sigma { font: bold 16px/16px "Liberation Serif", serif; text-align: center; }
.dd { width: 0; height: 0; border: 3px solid transparent; border-top-color: #000; border-bottom: 0; margin-left: -1px; }
.drop { width: 11px; height: 22px; display: flex; align-items: center; justify-content: center; flex: none; }
.drop::before { content: ""; border: 3px solid transparent; border-top-color: #000; border-bottom: 0; }
.view .drop { width: 12px; }
.sep { width: 5px; height: 14px; background: linear-gradient(#aaa, #aaa) center / 1px 100% no-repeat; flex: none; }

.work { flex: 1; min-height: 0; display: flex; padding-top: 3px; }
.strip { width: 23px; flex: none; display: flex; flex-direction: column; border-right: 1px solid #8a8f99; }
.strip-head { height: 16px; background: #0a50d8; color: #fff; display: flex; align-items: center; justify-content: flex-end; padding-right: 5px; }
.strip-cell { height: 22px; border: 1px solid #a0a0a0; border-left: 0; border-bottom: 0; }
.strip-gap { height: 28px; background: linear-gradient(#fff, #eee); border-top: 1px solid #a0a0a0; }
.strip-body { flex: 1; background: #fff; border-top: 1px solid #777c88; }
.x { width: 8px; height: 8px; overflow: visible; }
.pin { width: 8px; height: 10px; }

.dock { width: 202px; margin: 0 3px 0 4px; flex: none; display: flex; flex-direction: column; gap: 6px; }
.panel { display: flex; flex-direction: column; }
.head { margin: 0; height: 15px; display: flex; align-items: center; gap: 11px; font: 13px/13px "Noto Sans CJK SC", sans-serif; border: 1px solid #888; border-left: 0; padding-right: 4px; flex: none; }
.head span { flex: 1; margin-top: -2px; }
.components { height: 408px; flex: none; border-bottom: 1px solid #777c88; }
.panel-tools { height: 29px; display: flex; align-items: center; padding-left: 2px; background: linear-gradient(#fdfdfd, #f0f0f0); }
.search { display: flex; height: 24px; align-items: stretch; border: 1px solid #b4b8c0; margin-bottom: 1px; }
.search input { flex: 1; min-width: 0; background: #fff; border-right: 1px solid #ccc; padding-left: 2px; }
.search input::placeholder { color: #808080; opacity: 1; }
.search button { width: 25px; display: grid; place-items: center; }
.tree-box { flex: 1; min-height: 0; display: grid; grid-template: minmax(0, 1fr) 17px / minmax(0, 1fr) 16px; background: #fff; border: 1px solid #777c88; border-bottom: 0; }
.tree { margin: 0; padding: 0; list-style: none; overflow: hidden; font: 12px/16px "Noto Sans CJK SC", sans-serif; }
.tree li { height: 16px; display: flex; align-items: center; position: relative; }
.tree .g { width: 12px; height: 12px; flex: none; }
.node { padding-left: 29px; }
.node::before { content: ""; border: 3px solid transparent; border-right-color: #333; border-bottom-color: #333; margin-right: 3px; flex: none; }
.node > .g { margin: 0 7px 0 5px; }
.child { padding-left: 31px; }
.child::before { content: ""; width: 20px; height: 16px; border-left: 1px dotted #888; flex: none; }
.child::after { content: ""; position: absolute; left: 50px; top: 0; width: 11px; height: 9px; border: dotted #888; border-width: 0 0 1px 1px; }
.child .g { margin: 0 9px 0 11px; }
.last::before { border-color: transparent; }
mark { display: flex; align-items: center; height: 16px; background: #316ac5; color: #000; padding: 0 4px 0 3px; margin-left: 2px; }
mark .g { margin-right: 7px; }
.vscroll { background: #f2f2f2; display: flex; flex-direction: column; align-items: center; padding: 6px 0 8px; }
.vscroll .up { border: 4px solid transparent; border-bottom-color: #444; border-top: 0; }
.vscroll .down { border: 4px solid transparent; border-top-color: #444; border-bottom: 0; }
.vthumb { margin: 77px 0 7px; flex: 1; width: 14px; border: 1px solid #979797; border-radius: 2px; background: linear-gradient(90deg, #f5f5f5, #c4c5c9); display: grid; place-items: center; }
.vthumb i { width: 7px; height: 8px; background: repeating-linear-gradient(#666 0 1px, transparent 1px 3px); }
.hscroll { grid-column: 1 / 3; background: #f0f0f0; display: flex; align-items: center; padding: 0 24px 2px 7px; }
.hscroll .left { border: 4px solid transparent; border-right-color: #444; border-left: 0; }
.hscroll .right { border: 4px solid transparent; border-left-color: #444; border-right: 0; margin-left: auto; }
.hthumb { margin-left: 8px; width: 112px; height: 14px; border: 1px solid #979797; border-radius: 2px; background: linear-gradient(#f8f8f8, #c8c9cc); display: grid; place-items: center; }
.hthumb i { width: 8px; height: 7px; background: repeating-linear-gradient(90deg, #666 0 1px, transparent 1px 3px); }

.drawings { flex: 1; min-height: 0; }
.tabs { display: flex; align-items: flex-end; height: 23px; padding-top: 1px; font-family: "Noto Sans CJK SC", sans-serif; }
.tab { height: 19px; padding: 0 2px; border: 1px solid #888; border-left: 0; border-bottom: 0; background: #f0f0f0; }
.tab.cur { height: 22px; padding: 0 7px 2px; border-left: 1px solid #888; background: #fff; }
.sheet { flex: 1; min-height: 0; margin-right: 4px; border-left: 1px solid #888; padding: 3px 0 0 4px; background: #fff; display: flex; flex-direction: column; }
.sheet-tools { height: 24px; display: flex; align-items: flex-start; border-bottom: 1px solid #999; border-right: 1px solid #999; }
.sheet-tools button { height: 23px; border: 1px solid #999; background: #eee; padding: 0 4px; margin-right: -1px; }
.sheet-tools .arrow { width: 14px; display: grid; place-items: center; }
.sheet-tools .arrow .dd { margin: 0; }
.sheet-tools .more { margin: 0 0 0 auto; width: 12px; padding: 0 0 8px; font-weight: bold; }
.grid-wrap { flex: 1; margin-top: 1px; border: 1px solid #888; border-bottom: 0; border-right-width: 2px; overflow: hidden; }
.grid { width: 100%; table-layout: fixed; border-collapse: collapse; font: 12px/16px "Noto Sans CJK SC", sans-serif; }
.c-num { width: 21px; }
.c-name { width: 151px; }
.grid td, .grid th { height: 19px; padding: 0; border: solid #bbb; border-width: 0 1px 1px 0; overflow: hidden; font-weight: normal; }
.grid th { height: 26px; background: #f4f4f4; }
.grid .hot { background: linear-gradient(#fbd9a0, #efb965); color: #6b0044; }
.grid .cut { text-align: left; background: #fff; padding-left: 2px; }
.grid td:last-child { padding-left: 1px; font: 10px/12px "DejaVu Sans Mono", monospace; }
.grid .num { text-align: center; background: #f4f4f4; font: 10px/12px "DejaVu Sans Mono", monospace; }
.grid .sel, .ptable .sel { background: #ffd28a; color: #6b0044; }
.grid .name { padding-left: 19px; }
.grid .name.cell, .grid .name.kid { padding-left: 30px; }
.grid .cell { outline: 2px solid #808080; outline-offset: -2px; background-color: #e0ee28; }
.yellow { background: #ff0; }
.yellow .name { background-image: linear-gradient(#b0b070, #b0b070), linear-gradient(#b0b070, #b0b070); background-size: 16px 1px, 1px 100%; background-position: 9px 9px, 8px 0; background-repeat: no-repeat; }
.yellow .kid { background-size: 16px 1px, 1px 10px; }
.fold { display: inline-grid; place-items: center; width: 11px; height: 11px; border: 1px solid #999; background: #eee; line-height: 9px; }
.name .fold { margin: -2px 5px 0 -16px; vertical-align: middle; }

.center { flex: 1; min-width: 0; display: flex; flex-direction: column; gap: 2px; }
.row { flex: none; display: flex; gap: 1px; height: 26px; padding-left: 1px; }
.grip::before { content: ""; width: 3px; height: 14px; margin: 0 1px 0 3px; background: repeating-linear-gradient(#aaa 0 2px, transparent 2px 4px); }
.cad { padding-left: 1px; }
.empty { width: 29px; }
.pick { position: relative; width: 70px; height: 23px; margin-right: 1px; background: #fff; overflow: hidden; flex: none; }
.pick.short { width: 58px; }
.pick select { appearance: none; width: 100%; height: 23px; padding: 0 16px 0 2px; background: #fff; overflow: hidden; }
.pick::after { content: ""; position: absolute; right: 4px; top: 10px; border: 3px solid transparent; border-top-color: #000; border-bottom: 0; pointer-events: none; }
.canvas { flex: 1; min-height: 0; margin-top: -3px; background: #000; overflow: hidden; }
.scene { display: block; width: 100%; height: 100%; shape-rendering: crispEdges; }
.wire { fill: none; stroke: #00ff00; }
.edge { fill: none; stroke: #00ff00; stroke-dasharray: 3 2; }
.side { fill: #5c5c00; }
.top { fill: #757500; }
.tag { fill: #1048a0; font: bold 6px "Liberation Mono", monospace; }
.lvl { fill: #c8c8c8; font: bold 6px "Liberation Mono", monospace; }
.orbit { fill: none; stroke: #808080; }
.frame { fill: none; stroke: #ff3b3b; stroke-width: 3; }

.props { width: 29px; margin-left: 3px; flex: none; background: #fff; overflow: hidden; border-left: 1px solid #999; }
.props .head { background: #f0f0f0; }
.ptable { table-layout: fixed; width: 60px; margin-top: 1px; border-collapse: collapse; font: 10px/12px "DejaVu Sans Mono", monospace; border-top: 1px solid #999; }
.ptable th, .ptable td { height: 19px; padding: 0; border: solid #b4b4b4; border-width: 0 1px 1px 0; font-weight: normal; }
.ptable th { width: 22px; background: linear-gradient(#fff, #ececec); }
.ptable .phead th { height: 24px; }
.ptable .phead th:last-child { width: 38px; }
.ptable .blue { background: #3399ff; }
.ptable .fold { margin-left: 2px; vertical-align: middle; }
```
